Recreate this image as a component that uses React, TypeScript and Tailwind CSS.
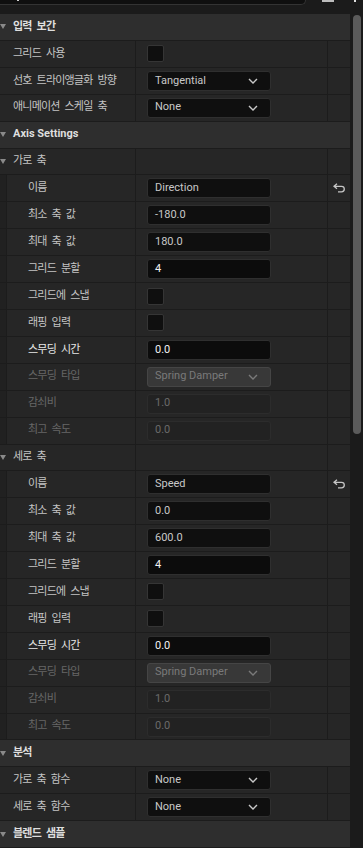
import React from 'react';

type Row =
  | { kind: 'section'; label: string }
  | { kind: 'group'; label: string }
  | {
      kind: 'prop';
      label: string;
      nested?: boolean;
      disabled?: boolean;
      bright?: boolean;
      widget: 'check' | 'select' | 'text' | 'num';
      value?: string;
      reset?: boolean;
    };

const axisRows = (name: string, min: string, max: string): Row[] => [
  { kind: 'prop', nested: true, label: '이름', widget: 'text', value: name, reset: true },
  { kind: 'prop', nested: true, label: '최소 축 값', widget: 'text', value: min },
  { kind: 'prop', nested: true, label: '최대 축 값', widget: 'text', value: max },
  { kind: 'prop', nested: true, label: '그리드 분할', widget: 'num', value: '4' },
  { kind: 'prop', nested: true, label: '그리드에 스냅', widget: 'check' },
  { kind: 'prop', nested: true, label: '래핑 입력', widget: 'check' },
  { kind: 'prop', nested: true, label: '스무딩 시간', widget: 'num', value: '0.0', bright: true },
  { kind: 'prop', nested: true, disabled: true, label: '스무딩 타입', widget: 'select', value: 'Spring Damper' },
  { kind: 'prop', nested: true, disabled: true, label: '감쇠비', widget: 'text', value: '1.0' },
  { kind: 'prop', nested: true, disabled: true, label: '최고 속도', widget: 'text', value: '0.0' },
];

const rows: Row[] = [
  { kind: 'section', label: '입력 보간' },
  { kind: 'prop', label: '그리드 사용', widget: 'check' },
  { kind: 'prop', label: '선호 트라이앵글화 방향', widget: 'select', value: 'Tangential' },
  { kind: 'prop', label: '애니메이션 스케일 축', widget: 'select', value: 'None' },
  { kind: 'section', label: 'Axis Settings' },
  { kind: 'group', label: '가로 축' },
  ...axisRows('Direction', '-180.0', '180.0'),
  { kind: 'group', label: '세로 축' },
  ...axisRows('Speed', '0.0', '600.0'),
  { kind: 'section', label: '분석' },
  { kind: 'prop', label: '가로 축 함수', widget: 'select', value: 'None' },
  { kind: 'prop', label: '세로 축 함수', widget: 'select', value: 'None' },
  { kind: 'section', label: '블렌드 샘플' },
];

const font = { fontFamily: 'Roboto, "Noto Sans CJK KR", sans-serif' };

const Caret = () => (
  <svg width="7" height="7" viewBox="0 0 7 7" className="shrink-0">
    <path d="M0 1 L6 1 L3 6 Z" fill="#8a8a8a" />
  </svg>
);

const Chevron = ({ color }: { color: string }) => (
  <svg width="10" height="6" viewBox="0 0 10 6" className="shrink-0">
    <path d="M1 1 L5 5 L9 1" fill="none" stroke={color} strokeWidth="1.4" />
  </svg>
);

const ResetIcon = () => (
  <svg width="13" height="10" viewBox="0 0 13 10">
    <path
      d="M4 0.8 L1 3.3 L4 5.8 M1.2 3.3 H8.5 a2.8 2.8 0 0 1 0 5.6 H5"
      fill="none"
      stroke="#c6c6c6"
      strokeWidth="1.3"
    />
  </svg>
);

function Widget({ row }: { row: Extract<Row, { kind: 'prop' }> }) {
  if (row.widget === 'check') {
    return <div className="w-[17px] h-[17px] rounded-[2px] bg-[#0f0f0f] border border-[#353535]" />;
  }
  if (row.widget === 'select') {
    return (
      <div
        className={
          row.disabled
            ? 'w-[124px] h-[20px] rounded-[3px] bg-[#383838] border border-[#454545] flex items-center pl-[7px] pr-[12px] justify-between text-[11px] text-[#7a7a7a]'
            : 'w-[124px] h-[20px] rounded-[3px] bg-[#0f0f0f] border border-[#2f2f2f] flex items-center pl-[7px] pr-[12px] justify-between text-[11px] text-[#c8c8c8]'
        }
      >
        <span>{row.value}</span>
        <Chevron color={row.disabled ? '#7a7a7a' : '#c8c8c8'} />
      </div>
    );
  }
  return (
    <div
      className={
        row.disabled
          ? 'w-[124px] h-[20px] rounded-[3px] bg-[#222222] border border-[#2c2c2c] flex items-center pl-[7px] text-[11px] text-[#6a6a6a]'
          : row.widget === 'num'
            ? 'w-[124px] h-[20px] rounded-[3px] bg-[#0c0c0c] border border-[#2f2f2f] flex items-center pl-[7px] text-[11px] text-[#f2f2f2]'
            : 'w-[124px] h-[20px] rounded-[3px] bg-[#0f0f0f] border border-[#2f2f2f] flex items-center pl-[7px] text-[11px] text-[#c8c8c8]'
      }
    >
      {row.value}
    </div>
  );
}

function RowView({ row }: { row: Row }) {
  if (row.kind === 'section') {
    return (
      <div className="h-[27px] border-b border-[#1c1c1c] bg-[#2e2e2e] flex items-center gap-[6px] font-bold text-[#dedede]">
        <Caret />
        <span
          className={
            /[a-z]/i.test(row.label) ? 'text-[11px]' : 'text-[11px] tracking-[-0.8px] [word-spacing:3px]'
          }
        >
          {row.label}
        </span>
      </div>
    );
  }
  if (row.kind === 'group') {
    return (
      <div className="h-[27px] border-b border-[#1c1c1c] bg-[#262626] flex">
        <div className="w-[136px] border-r border-[#1c1c1c] flex items-center gap-[6px] text-[11px] tracking-[-0.8px] [word-spacing:3px] text-[#c4c4c4]">
          <Caret />
          <span>{row.label}</span>
        </div>
        <div className="w-[192px] border-r border-[#1c1c1c]" />
        <div className="flex-1" />
      </div>
    );
  }
  const labelColor = row.disabled ? 'text-[#676767]' : row.bright ? 'text-[#e6e6e6]' : 'text-[#c4c4c4]';
  return (
    <div className="h-[27px] border-b border-[#1c1c1c] bg-[#262626] flex">
      <div className="w-[136px] border-r border-[#1c1c1c] flex items-center">
        {row.nested ? (
          <>
            <div className="w-[7px] h-full bg-[#212121] border-r border-[#1c1c1c]" />
            <span className={`pl-[21px] text-[11px] tracking-[-0.8px] [word-spacing:3px] ${labelColor}`}>
              {row.label}
            </span>
          </>
        ) : (
          <span className={`pl-[13px] text-[11px] tracking-[-0.8px] [word-spacing:3px] ${labelColor}`}>
            {row.label}
          </span>
        )}
      </div>
      <div className="w-[192px] border-r border-[#1c1c1c] flex items-center pl-[11px]">
        <Widget row={row} />
      </div>
      <div className="flex-1 flex items-center justify-center">{row.reset && <ResetIcon />}</div>
    </div>
  );
}

export default function App() {
  return (
    <div className="w-[363px] h-[848px] bg-[#1b1b1b] overflow-hidden flex" style={font}>
      <div className="w-[350px] flex flex-col">
        <div className="h-[14px] shrink-0 flex items-start">
          <div className="w-[306px] h-[5px] bg-[#0f0f0f] border-b border-r border-[#333] rounded-br-[6px] relative">
            <div className="absolute left-[17px] top-0 w-[2px] h-[1px] bg-[#d0d0d0]" />
          </div>
          <div className="ml-[16px] mt-0 w-[12px] h-[2px] bg-[#bdbdbd]" />
        </div>
        {rows.map((r, i) => (
          <RowView key={i} row={r} />
        ))}
      </div>
      <div className="w-[13px] flex flex-col items-start">
        <div className="ml-[4px] w-[2px] h-[2px] bg-[#e0e0e0]" />
        <div className="ml-[3px] mt-[13px] w-[8px] h-[419px] rounded-full bg-[#5b5b5b]" />
      </div>
    </div>
  );
}
